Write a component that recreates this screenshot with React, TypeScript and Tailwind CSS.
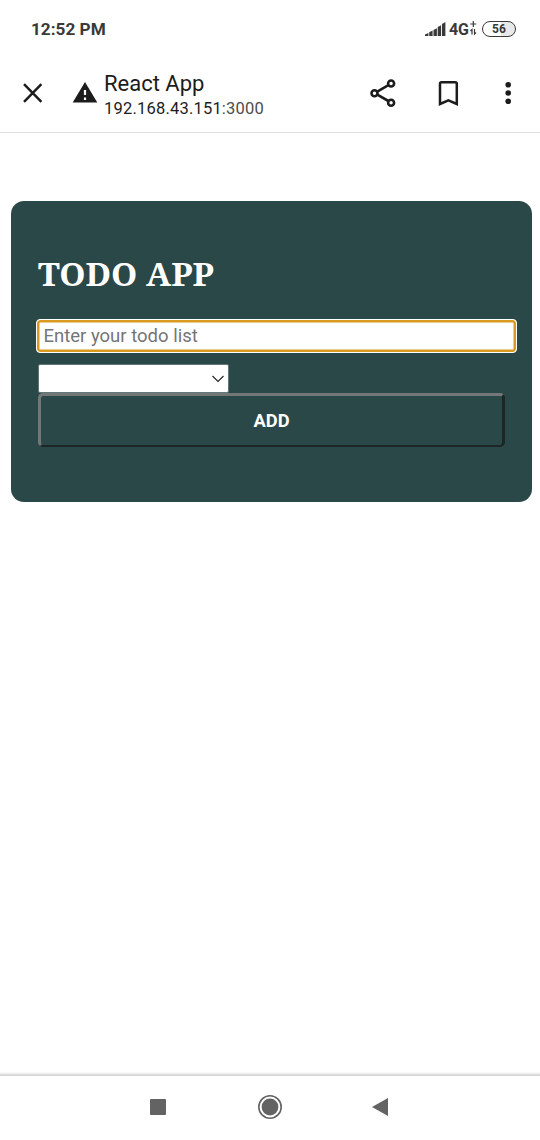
import React from "react";

function StatusBar() {
  return (
    <header className="flex h-14 items-center justify-between pt-[2px] pr-6 pl-[31px] text-[#3a3a3a]">
      <span className="text-[17.2px] leading-5 font-bold">12:52 PM</span>
      <div className="flex items-center">
        <svg className="mr-[3px] h-4 w-[21px]" viewBox="0 0 21 16" fill="currentColor">
          <path d="M0 15v-1.5L3.4 12v3ZM4.2 15v-3.8L7.6 9.5V15ZM8.5 15V9L11.9 7.2V15ZM12.7 15V6L16.1 4.2V15ZM17 15V3L20.4 1V15Z" />
        </svg>
        <span className="pt-px text-base leading-5 font-bold">4G</span>
        <svg className="mr-[5px] h-[18px] w-[8px]" viewBox="0 0 8 18" fill="none" stroke="currentColor" strokeWidth="1.2">
          <path d="M4.3 1v6M1.3 4h6M3 14.5v-5l-1.5 1.5M5.5 9v5l1.5-1.5" />
        </svg>
        <span className="flex h-4 w-[34px] items-center justify-center rounded-full border-[1.5px] border-[#3a3a3a] bg-gradient-to-r from-white from-55% to-[#e9e9e9] to-55% text-[12px] leading-3 font-bold">
          56
        </span>
      </div>
    </header>
  );
}

function BrowserBar() {
  return (
    <nav className="flex h-[77px] items-center border-b border-[#dfdfdf] pb-[2px] text-[#1c1c1c]">
      <svg className="ml-[22px] h-[22px] w-[22px] shrink-0" viewBox="0 0 22 22" stroke="currentColor" strokeWidth="2.5">
        <path d="M2 2.2 19.4 19.8M19.4 2.2 2 19.8" />
      </svg>
      <svg className="ml-[28px] h-[22px] w-[26px] shrink-0" viewBox="0 0 26 22">
        <path d="M13 0 25.3 20.5H.7Z" fill="currentColor" />
        <path d="M13 8v5M13 15.5V18" stroke="white" strokeWidth="2.2" />
      </svg>
      <div className="ml-[6px] flex flex-1 flex-col pt-[7px]">
        <span className="text-[22px] leading-6">React App</span>
        <span className="text-[16.5px] leading-[25px] tracking-[0.2px]">
          192.168.43.151<span className="text-[#4d4d4d]">:3000</span>
        </span>
      </div>
      <svg className="h-7 w-[26px]" viewBox="0 0 26 28" fill="none" stroke="currentColor" strokeWidth="2.6">
        <path d="M7.3 12.7 18.4 6.2M7.3 15.7 18.4 22" />
        <circle cx="4.5" cy="14.2" r="3" />
        <circle cx="21.1" cy="4.5" r="3" />
        <circle cx="21.1" cy="23.7" r="3" />
      </svg>
      <svg className="ml-[42px] h-[26px] w-[22px]" viewBox="0 0 22 26" fill="none" stroke="currentColor" strokeWidth="2.5">
        <path d="M2 24V3.8Q2 2.2 3.6 2.2H17.2Q18.8 2.2 18.8 3.8V24L10.4 20.4Z" />
      </svg>
      <svg className="mr-[28px] ml-[44px] h-6 w-[8px]" viewBox="0 0 8 24" fill="currentColor">
        <circle cx="4.2" cy="3.7" r="2.8" />
        <circle cx="4.2" cy="12" r="2.8" />
        <circle cx="4.2" cy="20.3" r="2.8" />
      </svg>
    </nav>
  );
}

function TodoCard() {
  return (
    <section className="mt-[68px] mr-2 ml-[11px] flex h-[301px] flex-col rounded-[13px] bg-[#2b4848] pl-[27px]">
      <h1 className="mt-[51px] h-[67px] font-['Noto_Serif','Liberation_Serif',serif] text-[33.4px] leading-[42px] font-bold text-white">
        TODO APP
      </h1>
      <input
        className="-ml-[2px] h-[34px] w-[481px] rounded-[4px] border border-white bg-white px-[6.5px] text-[18.5px] text-[#333] shadow-[inset_0_0_0_2.5px_#d99a1f] outline-none placeholder:text-[#757575]"
        placeholder="Enter your todo list"
      />
      <div className="mt-[11px] flex h-[29px] w-[191px] items-center justify-end rounded-[2px] border border-[#647777] bg-white pr-1">
        <svg className="h-2 w-3" viewBox="0 0 12 8" fill="none" stroke="#222" strokeWidth="1.1">
          <path d="M.5 1 6 6.5 11.5 1" />
        </svg>
      </div>
      <button className="h-[54px] w-[467px] rounded-[5px] border-3 border-b-2 border-t-[#747777] border-r-[#1d2526] border-b-[#1d2526] border-l-[#747777] text-[18.3px] font-bold text-white">
        ADD
      </button>
    </section>
  );
}

function NavigationBar() {
  return (
    <footer className="mt-auto">
      <div className="h-1 bg-gradient-to-b from-white to-[#cfcfcf]" />
      <div className="flex h-16 items-center justify-center gap-[92px] pr-[2px] pb-[2px] text-[#636363]">
        <svg className="h-4 w-4" viewBox="0 0 16 16">
          <rect width="16" height="16" rx="1" fill="currentColor" />
        </svg>
        <svg className="h-6 w-6" viewBox="0 0 24 24">
          <circle cx="12" cy="12" r="11.2" fill="none" stroke="currentColor" strokeWidth="1.6" />
          <circle cx="12" cy="12" r="8.4" fill="currentColor" />
        </svg>
        <svg className="-ml-[2px] h-[18px] w-4" viewBox="0 0 16 18">
          <path d="M0 9 16 0V18Z" fill="currentColor" />
        </svg>
      </div>
    </footer>
  );
}

export default function App() {
  return (
    <div className="flex h-[1140px] w-[540px] flex-col bg-white font-['Roboto',sans-serif]">
      <StatusBar />
      <BrowserBar />
      <TodoCard />
      <NavigationBar />
    </div>
  );
}
